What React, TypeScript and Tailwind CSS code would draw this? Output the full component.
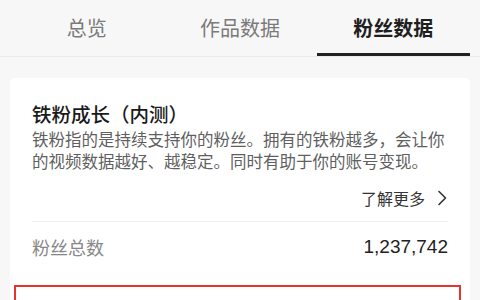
import React from 'react'

const tabs = ['总览', '作品数据', '粉丝数据']

function Chevron() {
  return (
    <svg width="10" height="16" viewBox="0 0 10 16" fill="none" className="ml-[12px]">
      <polyline points="2,1.5 8.5,8 2,14.5" stroke="#333" strokeWidth="1.6" strokeLinecap="round" strokeLinejoin="round" />
    </svg>
  )
}

export default function App() {
  const active = 2
  return (
    <div className="w-[480px] h-[300px] overflow-hidden bg-[#f7f7f7] font-['Noto_Sans_CJK_SC',sans-serif]">
      {/* Tabs */}
      <div className="flex h-[57px] px-[10px] border-b border-[#ebebeb]">
        {tabs.map((t, i) => (
          <div key={t} className="relative flex-1 flex items-center justify-center">
            <span
              className={
                i === active
                  ? 'text-[20px] font-bold text-[#1f1f1f]'
                  : 'text-[20px] text-[#7a7a7a]'
              }
            >
              {t}
            </span>
            {i === active && <div className="absolute left-0 right-0 bottom-[0px] h-[3px] bg-[#222]" />}
          </div>
        ))}
      </div>

      {/* Card */}
      <div className="mx-[10px] mt-[21px] bg-white rounded-[5px] pt-[22px]">
        <div className="px-[22px]">
          <div className="text-[19.5px] leading-[28px] font-medium text-[#1a1a1a]">铁粉成长（内测）</div>
          <div className="text-[16.5px] leading-[22px] text-[#5f5f5f] whitespace-nowrap">
            <div>铁粉指的是持续支持你的粉丝。拥有的铁粉越多，会让你</div>
            <div>的视频数据越好、越稳定。同时有助于你的账号变现。</div>
          </div>
          <div className="flex items-center justify-end mt-[14px] h-[24px] pr-[1px]">
            <span className="text-[16px] text-[#333]">了解更多</span>
            <Chevron />
          </div>
          <div className="mt-[11px] h-px bg-[#ededed]" />
          <div className="flex items-center justify-between h-[50px]">
            <span className="text-[18px] text-[#888]">粉丝总数</span>
            <span className="text-[19px] text-[#222] font-['Liberation_Sans',sans-serif]">1,237,742</span>
          </div>
        </div>
        <div className="mt-[13px] ml-[4px] mr-[9px] border-[2.5px] border-[#e8342e] h-[60px]">
          <div className="flex items-center justify-between pl-[16px] pr-[14px] pt-[7px]">
            <span className="text-[18px] text-[#888]">铁粉总数</span>
            <span className="text-[19px] text-[#222] font-['Liberation_Sans',sans-serif]">123,456</span>
          </div>
        </div>
      </div>
    </div>
  )
}
